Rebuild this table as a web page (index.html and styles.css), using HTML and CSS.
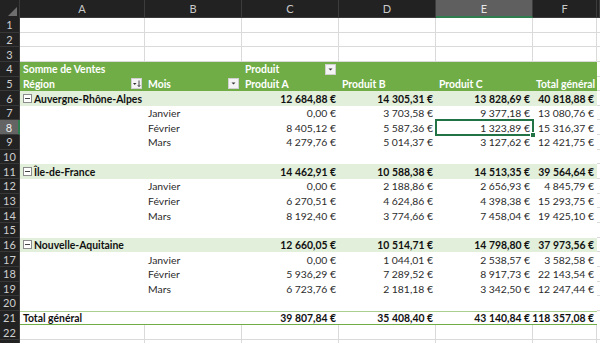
FILE: index.html
```html
<!DOCTYPE html>
<html lang="fr">
<head>
<meta charset="utf-8">
<title>Tableau croisé dynamique</title>
<link rel="stylesheet" href="styles.css">
</head>
<body>
<div class="sheet">
  <div class="row hdr">
    <div class="corner"><svg width="20" height="18" viewBox="0 0 20 18"><polygon points="8,16 17,16 17,7" fill="#6e6e6e"/></svg></div>
    <div class="ch">A</div><div class="ch">B</div><div class="ch">C</div><div class="ch">D</div><div class="ch csel">E</div><div class="ch">F</div><div class="ch"></div>
  </div>

  <div class="row"><div class="rh">1</div><div class="c g"></div><div class="c g"></div><div class="c g"></div><div class="c g"></div><div class="c g"></div><div class="c g"></div><div class="c g"></div></div>
  <div class="row"><div class="rh">2</div><div class="c g"></div><div class="c g"></div><div class="c g"></div><div class="c g"></div><div class="c g"></div><div class="c g"></div><div class="c g"></div></div>
  <div class="row"><div class="rh">3</div><div class="c g"></div><div class="c g"></div><div class="c g"></div><div class="c g"></div><div class="c g"></div><div class="c g"></div><div class="c g"></div></div>

  <div class="row"><div class="rh">4</div>
    <div class="c hd">Somme de Ventes</div><div class="c hd"></div>
    <div class="c hd sp">Produit<span class="btn"><svg width="11" height="11" viewBox="0 0 11 11"><polygon points="3.5,4.5 7.5,4.5 5.5,6.5" fill="#333"/></svg></span></div>
    <div class="c hd"></div><div class="c hd"></div><div class="c hd"></div><div class="c g"></div>
  </div>
  <div class="row"><div class="rh">5</div>
    <div class="c hd sp">Région<span class="btn"><svg width="11" height="11" viewBox="0 0 11 11"><polygon points="2,5 5.5,5 3.75,7" fill="#333"/><path d="M8 2.5 V8.5 M6.8 7.2 L8 8.6 L9.2 7.2" stroke="#333" stroke-width="0.9" fill="none"/></svg></span></div>
    <div class="c hd sp">Mois<span class="btn"><svg width="11" height="11" viewBox="0 0 11 11"><polygon points="3.5,4.5 7.5,4.5 5.5,6.5" fill="#333"/></svg></span></div>
    <div class="c hd">Produit A</div><div class="c hd">Produit B</div><div class="c hd">Produit C</div><div class="c hd">Total général</div><div class="c g"></div>
  </div>

  <div class="row"><div class="rh">6</div>
    <div class="c band b"><span class="mbox"></span>Auvergne-Rhône-Alpes</div><div class="c band"></div>
    <div class="c band b r">12 684,88 €</div><div class="c band b r">14 305,31 €</div><div class="c band b r">13 828,69 €</div><div class="c band b r">40 818,88 €</div><div class="c g"></div>
  </div>
  <div class="row"><div class="rh">7</div><div class="c"></div><div class="c">Janvier</div><div class="c r">0,00 €</div><div class="c r">3 703,58 €</div><div class="c r">9 377,18 €</div><div class="c r">13 080,76 €</div><div class="c g"></div></div>
  <div class="row"><div class="rh rsel">8</div><div class="c"></div><div class="c">Février</div><div class="c r">8 405,12 €</div><div class="c r">5 587,36 €</div><div class="c r sel">1 323,89 €</div><div class="c r">15 316,37 €</div><div class="c g"></div></div>
  <div class="row"><div class="rh">9</div><div class="c"></div><div class="c">Mars</div><div class="c r">4 279,76 €</div><div class="c r">5 014,37 €</div><div class="c r">3 127,62 €</div><div class="c r">12 421,75 €</div><div class="c g"></div></div>
  <div class="row"><div class="rh">10</div><div class="c"></div><div class="c"></div><div class="c"></div><div class="c"></div><div class="c"></div><div class="c"></div><div class="c g"></div></div>

  <div class="row"><div class="rh">11</div>
    <div class="c band b"><span class="mbox"></span>Île-de-France</div><div class="c band"></div>
    <div class="c band b r">14 462,91 €</div><div class="c band b r">10 588,38 €</div><div class="c band b r">14 513,35 €</div><div class="c band b r">39 564,64 €</div><div class="c g"></div>
  </div>
  <div class="row"><div class="rh">12</div><div class="c"></div><div class="c">Janvier</div><div class="c r">0,00 €</div><div class="c r">2 188,86 €</div><div class="c r">2 656,93 €</div><div class="c r">4 845,79 €</div><div class="c g"></div></div>
  <div class="row"><div class="rh">13</div><div class="c"></div><div class="c">Février</div><div class="c r">6 270,51 €</div><div class="c r">4 624,86 €</div><div class="c r">4 398,38 €</div><div class="c r">15 293,75 €</div><div class="c g"></div></div>
  <div class="row"><div class="rh">14</div><div class="c"></div><div class="c">Mars</div><div class="c r">8 192,40 €</div><div class="c r">3 774,66 €</div><div class="c r">7 458,04 €</div><div class="c r">19 425,10 €</div><div class="c g"></div></div>
  <div class="row"><div class="rh">15</div><div class="c"></div><div class="c"></div><div class="c"></div><div class="c"></div><div class="c"></div><div class="c"></div><div class="c g"></div></div>

  <div class="row"><div class="rh">16</div>
    <div class="c band b"><span class="mbox"></span>Nouvelle-Aquitaine</div><div class="c band"></div>
    <div class="c band b r">12 660,05 €</div><div class="c band b r">10 514,71 €</div><div class="c band b r">14 798,80 €</div><div class="c band b r">37 973,56 €</div><div class="c g"></div>
  </div>
  <div class="row"><div class="rh">17</div><div class="c"></div><div class="c">Janvier</div><div class="c r">0,00 €</div><div class="c r">1 044,01 €</div><div class="c r">2 538,57 €</div><div class="c r">3 582,58 €</div><div class="c g"></div></div>
  <div class="row"><div class="rh">18</div><div class="c"></div><div class="c">Février</div><div class="c r">5 936,29 €</div><div class="c r">7 289,52 €</div><div class="c r">8 917,73 €</div><div class="c r">22 143,54 €</div><div class="c g"></div></div>
  <div class="row"><div class="rh">19</div><div class="c"></div><div class="c">Mars</div><div class="c r">6 723,76 €</div><div class="c r">2 181,18 €</div><div class="c r">3 342,50 €</div><div class="c r">12 247,44 €</div><div class="c g"></div></div>
  <div class="row"><div class="rh">20</div><div class="c"></div><div class="c"></div><div class="c"></div><div class="c"></div><div class="c"></div><div class="c"></div><div class="c g"></div></div>

  <div class="row"><div class="rh">21</div>
    <div class="c tot b">Total général</div><div class="c tot"></div>
    <div class="c tot b r">39 807,84 €</div><div class="c tot b r">35 408,40 €</div><div class="c tot b r">43 140,84 €</div><div class="c tot b r">118 357,08 €</div><div class="c g"></div>
  </div>
  <div class="row"><div class="rh">22</div><div class="c g"></div><div class="c g"></div><div class="c g"></div><div class="c g"></div><div class="c g"></div><div class="c g"></div><div class="c g"></div></div>
  <div class="row"><div class="rh"></div><div class="c g"></div><div class="c g"></div><div class="c g"></div><div class="c g"></div><div class="c g"></div><div class="c g"></div><div class="c g"></div></div>
</div>
</body>
</html>
```
FILE: styles.css
```css
html, body {
  margin: 0;
  padding: 0;
  background: #ffffff;
  overflow: hidden;
}

.sheet {
  font-family: Lato, "Liberation Sans", sans-serif;
  font-size: 10.4px;
  color: #2b2b2b;
  width: 600px;
}

.row {
  display: grid;
  grid-template-columns: 20px 125px 97px 97px 97px 97px 64px 1fr;
  height: 14.65px;
}

.row.hdr {
  height: 18px;
  background: #222222;
}

.corner {
  background: #222222;
  border-right: 1px solid #3a3a3a;
  box-sizing: border-box;
}

.corner svg { display: block; }

.ch {
  display: flex;
  align-items: center;
  justify-content: center;
  color: #c9c9c9;
  border-right: 1px solid #3c3c3c;
  border-bottom: 1px solid #3a3a3a;
  box-sizing: border-box;
  font-size: 11px;
}

.ch.csel {
  background: #5f5f5f;
  color: #e6e6e6;
  border-bottom: 2px solid #2f7d4f;
}

.rh {
  display: flex;
  align-items: center;
  justify-content: center;
  background: #222222;
  color: #cfcfcf;
  border-bottom: 1px solid #383838;
  border-right: 1px solid #3a3a3a;
  box-sizing: border-box;
  font-size: 11px;
}

.rh.rsel {
  background: #646464;
  color: #f0f0f0;
  border-right: 2px solid #2f7d4f;
}

.c {
  display: flex;
  align-items: center;
  padding: 0 3px;
  box-sizing: border-box;
  white-space: nowrap;
  overflow: visible;
  min-width: 0;
  background: #ffffff;
}

.g {
  border-right: 1px solid #dadada;
  border-bottom: 1px solid #dadada;
}

.r { justify-content: flex-end; }
.b { font-weight: 700; color: #111111; }

.hd {
  background: #70ad47;
  color: #ffffff;
  font-weight: 700;
}

.sp { justify-content: space-between; padding-right: 3px; }

.btn {
  display: block;
  width: 11px;
  height: 11px;
  background: #f4f4f4;
  border: 1px solid #d0d0d0;
  box-sizing: border-box;
}

.btn svg { display: block; margin: -1px; }

.band { background: #e2efda; }

.mbox {
  display: inline-block;
  width: 7px;
  height: 7px;
  border: 1px solid #8c8c8c;
  background: #ffffff;
  margin-right: 2px;
  position: relative;
  flex: none;
}

.mbox::after {
  content: "";
  position: absolute;
  left: 1px;
  right: 1px;
  top: 3px;
  height: 1px;
  background: #444444;
}

.tot {
  border-top: 1px solid #a9d08e;
  border-bottom: 2px solid #70ad47;
}

.sel {
  position: relative;
  outline: 2px solid #217346;
  outline-offset: -1px;
  z-index: 1;
}

.sel::after {
  content: "";
  position: absolute;
  right: -3px;
  bottom: -3px;
  width: 4px;
  height: 4px;
  background: #217346;
  border: 1px solid #ffffff;
}
```
